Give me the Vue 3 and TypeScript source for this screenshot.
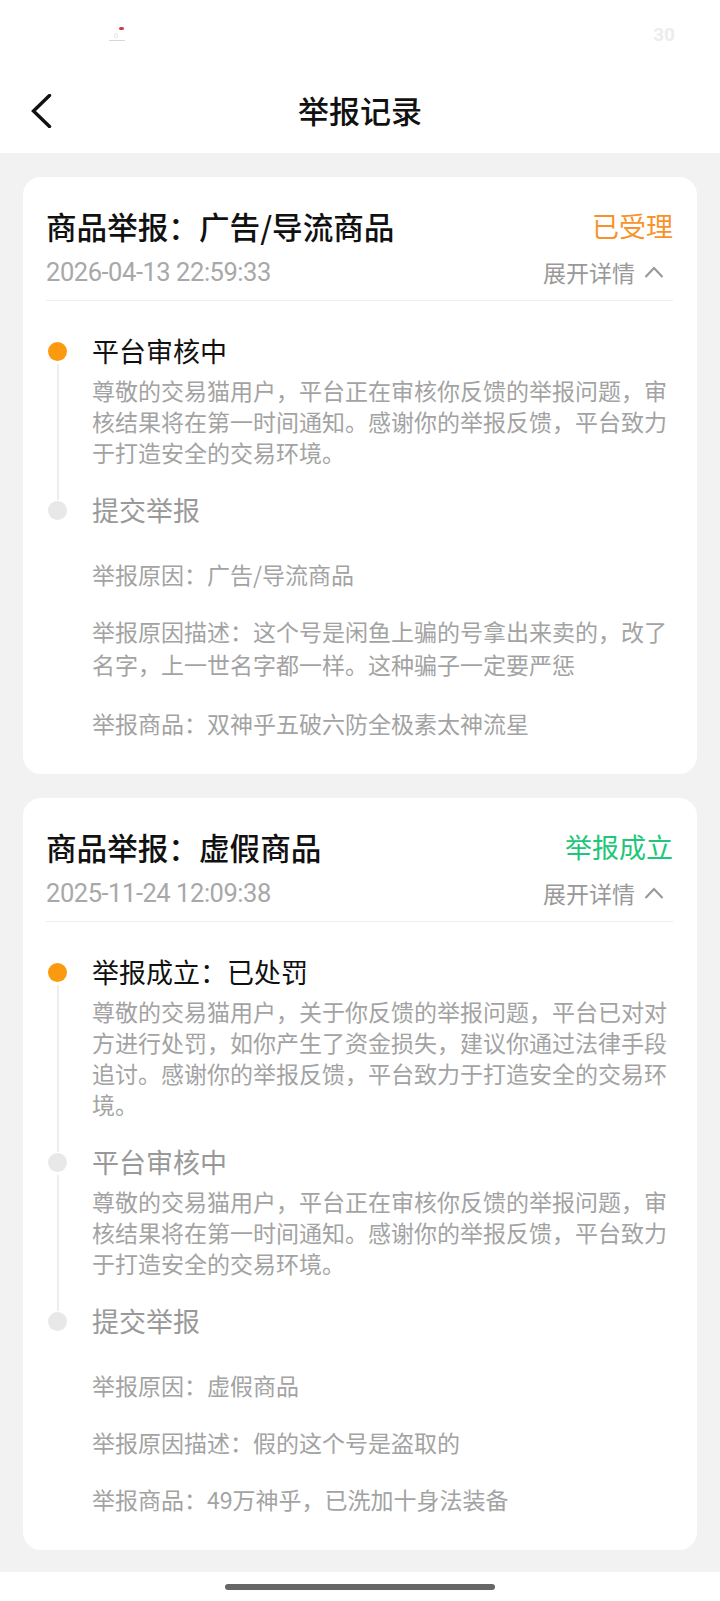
<script setup lang="ts">
interface Step { title: string; body?: string[] }
interface Detail { text: string; wrapped?: boolean }
interface Report {
  title: string; status: string; tone: string; date: string;
  steps: Step[]; details: Detail[];
}
const auditing = ['尊敬的交易猫用户，平台正在审核你反馈的举报问题，审', '核结果将在第一时间通知。感谢你的举报反馈，平台致力', '于打造安全的交易环境。'];
const reports: Report[] = [
  {
    title: '商品举报：广告/导流商品', status: '已受理', tone: 'orange', date: '2026-04-13 22:59:33',
    steps: [{ title: '平台审核中', body: auditing }, { title: '提交举报' }],
    details: [
      { text: '举报原因：广告/导流商品' },
      { text: '举报原因描述：这个号是闲鱼上骗的号拿出来卖的，改了\n名字，上一世名字都一样。这种骗子一定要严惩', wrapped: true },
      { text: '举报商品：双神乎五破六防全极素太神流星' },
    ],
  },
  {
    title: '商品举报：虚假商品', status: '举报成立', tone: 'green', date: '2025-11-24 12:09:38',
    steps: [
      { title: '举报成立：已处罚', body: ['尊敬的交易猫用户，关于你反馈的举报问题，平台已对对', '方进行处罚，如你产生了资金损失，建议你通过法律手段', '追讨。感谢你的举报反馈，平台致力于打造安全的交易环', '境。'] },
      { title: '平台审核中', body: auditing },
      { title: '提交举报' },
    ],
    details: [
      { text: '举报原因：虚假商品' },
      { text: '举报原因描述：假的这个号是盗取的' },
      { text: '举报商品：49万神乎，已洗加十身法装备' },
    ],
  },
];
</script>

<template>
  <div class="page">
    <header class="status">
      <span class="logo"><i class="logo-red"></i><i class="logo-mark"></i><i class="logo-text"></i></span>
      <span class="clock">30</span>
    </header>
    <nav class="nav">
      <svg class="back" width="22" height="34" viewBox="0 0 22 34" fill="none">
        <path d="M19.5 1.5 3.500 17l16 15.500" stroke="#111" stroke-width="3.400" stroke-linecap="round" stroke-linejoin="miter" />
      </svg>
      <h1>举报记录</h1>
    </nav>
    <main class="list">
      <section v-for="r in reports" :key="r.date" class="card">
        <div class="head">
          <h2>{{ r.title }}</h2>
          <span class="state" :class="r.tone">{{ r.status }}</span>
        </div>
        <div class="meta">
          <time>{{ r.date }}</time>
          <span class="toggle">展开详情
            <svg width="20" height="12" viewBox="0 0 20 12" fill="none">
              <path d="M1.500 11 10 2l8.500 9" stroke="#999" stroke-width="2.200" />
            </svg>
          </span>
        </div>
        <div class="steps">
          <div v-for="(s, i) in r.steps" :key="s.title" class="step" :class="{ active: i === 0, last: i === r.steps.length - 1 }">
            <div class="rail"><i class="dot"></i><i v-if="i < r.steps.length - 1" class="line"></i></div>
            <div class="content">
              <div class="step-title">{{ s.title }}</div>
              <div v-if="s.body" class="body">
                <div v-for="l in s.body" :key="l">{{ l }}</div>
              </div>
            </div>
          </div>
        </div>
        <div class="details">
          <p v-for="d in r.details" :key="d.text" :class="{ wrapped: d.wrapped }">{{ d.text }}</p>
        </div>
      </section>
    </main>
    <footer class="home"><i></i></footer>
  </div>
</template>

<style>
html, body { margin: 0; background: #fff; }
</style>

<style scoped>
.page {
  width: 720px; height: 1601px; overflow: hidden; background: #fff;
  font-family: "Noto Sans CJK SC", "Noto Sans", sans-serif;
}
.status { height: 66px; position: relative; display: flex; justify-content: flex-end; padding: 23px 45px 0 0; box-sizing: border-box; }
.clock { font: 700 19px/24px "Roboto", sans-serif; color: #ececec; }
.logo { position: absolute; left: 108px; top: 26px; width: 20px; height: 18px; }
.logo i { position: absolute; display: block; }
.logo-red { left: 11px; top: 1px; width: 5px; height: 3px; background: #c8404a; border-radius: 2px; }
.logo-mark { left: 6px; top: 7px; width: 4px; height: 5px; border: 1px solid #e6e6e6; border-radius: 50%; box-sizing: border-box; }
.logo-text { left: 1px; top: 14px; width: 16px; height: 1px; background: #d8d8d8; }
.nav { height: 87px; position: relative; display: flex; align-items: center; justify-content: center; }
.nav h1 { margin: 0; font-size: 31px; font-weight: 500; color: #111; line-height: 40px; }
.back { position: absolute; left: 30px; top: 28px; }
.list { height: 1419px; box-sizing: border-box; background: #f2f2f2; padding: 24px 23px 0; display: flex; flex-direction: column; gap: 23.500px; }
.card { background: #fff; border-radius: 18px; padding: 26px 24px 34px 23px; }
.head { display: flex; justify-content: space-between; align-items: center; height: 46px; }
.head h2 { margin: 0; font-size: 30.600px; font-weight: 500; color: #111; line-height: 46px; }
.state { font-size: 27px; line-height: 36px; }
.orange { color: #f7932a; }
.green { color: #20c679; }
.meta { display: flex; justify-content: space-between; align-items: center; height: 40px; margin-top: 3px; padding-bottom: 8px; border-bottom: 1px solid #eeeeee; color: #a8a8a8; }
.meta time { font: 25.500px/40px "Roboto", sans-serif; letter-spacing: -0.450px; }
.toggle { font-size: 23px; color: #999; display: flex; align-items: center; gap: 9px; padding-right: 9px; }
.steps { margin-top: 32px; }
.step { display: flex; }
.rail { width: 46px; flex: none; display: flex; flex-direction: column; align-items: flex-start; }
.rail .dot { width: 19px; height: 19px; border-radius: 50%; background: #e8e8e8; margin: 9px 0 0 2px; flex: none; }
.active .dot { background: #fb9a0e; }
.line { width: 2px; flex: 1; background: #eeeeee; margin: 3px 0 -8px 10.500px; }
.content { flex: 1; padding-bottom: 24px; }
.step.last .content { padding-bottom: 0; }
.step-title { font-size: 27px; line-height: 36px; color: #999; }
.active .step-title { color: #111; }
.body { font-size: 23px; line-height: 31px; color: #a3a3a3; margin-top: 6px; }
.details { margin: 30px 0 0 46px; font-size: 23px; line-height: 33px; color: #a3a3a3; }
.details p { margin: 0 0 24px; white-space: pre-line; }
.details p.wrapped { margin-bottom: 26px; }
.details p:last-child { margin-bottom: 0; }
.home { height: 29px; background: #fff; position: relative; display: flex; justify-content: center; padding-top: 12px; box-sizing: border-box; }
.home i { display: block; width: 270px; height: 6px; border-radius: 3px; background: #666; }
</style>
